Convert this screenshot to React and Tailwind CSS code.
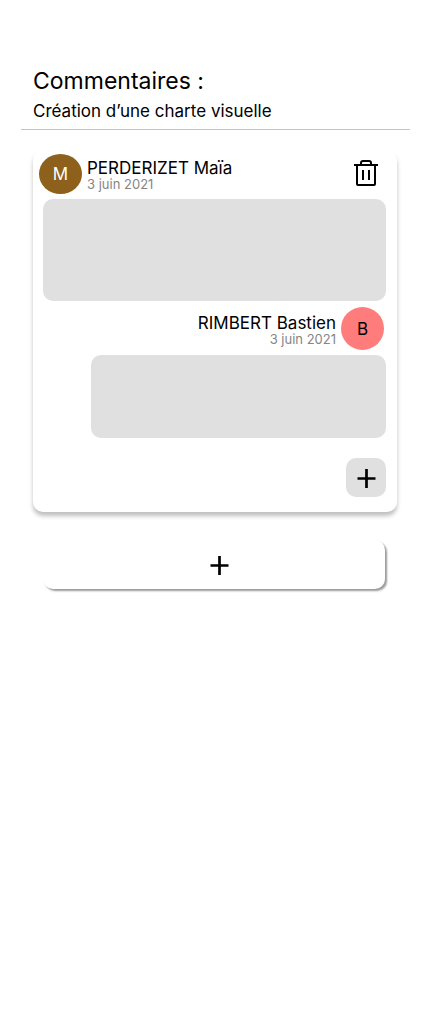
import React from "react";

function TrashIcon() {
  return (
    <svg width="24" height="26" viewBox="0 0 24 26" fill="none" stroke="black" strokeWidth="2" aria-hidden="true">
      <path d="M0 5H24" />
      <path d="M3 5V24Q3 25 4 25H20Q21 25 21 24V5" />
      <path d="M7 5V3Q7 1 9 1H15Q17 1 17 3V5" />
      <path d="M9 10V20M15 10V20" />
    </svg>
  );
}

function PlusIcon() {
  return (
    <svg width="19" height="20" viewBox="0 0 19 20" fill="none" stroke="black" strokeWidth="2.7" aria-hidden="true">
      <path d="M0.5 10.5H18.5M9.5 1V20" />
    </svg>
  );
}

function Author({ name, date, alignEnd }) {
  return (
    <div className={alignEnd ? "pt-[2px] text-right" : "pt-[2px] text-left"}>
      <h2 className="text-[17px] leading-[18px] text-black">{name}</h2>
      <p className="text-[13px] leading-[14px] text-[#858585]">{date}</p>
    </div>
  );
}

export default function App() {
  return (
    <main className="min-h-screen bg-white pt-[65px] font-['Inter','Liberation_Sans',sans-serif] text-black">
      <header className="ml-[21px] mr-[19px] border-b border-[#c4c4c4] px-3 pb-[7px]">
        <h1 className="text-[23px] leading-8">Commentaires :</h1>
        <p className="mt-1 text-[17px] leading-[21px]">Création d’une charte visuelle</p>
      </header>

      <section className="ml-[33px] mr-8 mt-5 rounded-[10px] pb-[15px] pl-[10px] pr-[11px] pt-[4px] shadow-[0_4px_4px_rgba(0,0,0,0.25)]">
        <article>
          <div className="-ml-1 flex items-center gap-[5px] pr-2">
            <div className="flex h-10 w-[43px] items-center justify-center rounded-[50%] bg-[#8d601b] pt-[2px] text-[17px] text-white">M</div>
            <Author name="PERDERIZET Maïa" date="3 juin 2021" />
            <button type="button" aria-label="Supprimer le commentaire" className="ml-auto cursor-pointer pb-[2px]">
              <TrashIcon />
            </button>
          </div>
          <div className="mt-[5px] h-[102px] rounded-[10px] bg-[#e0e0e0]" />
        </article>

        <article className="mt-[6px]">
          <div className="flex items-center justify-end gap-[5px] pr-[2px]">
            <Author name="RIMBERT Bastien" date="3 juin 2021" alignEnd />
            <div className="flex h-[43px] w-[43px] items-center justify-center rounded-full bg-[#ff7c7c] pt-[2px] text-[17px]">B</div>
          </div>
          <div className="ml-12 mt-[5px] h-[83px] rounded-[10px] bg-[#e0e0e0]" />
        </article>

        <div className="mt-5 flex justify-end">
          <button type="button" aria-label="Répondre" className="flex h-[39px] w-10 cursor-pointer items-center justify-center rounded-[10px] bg-[#e0e0e0]">
            <PlusIcon />
          </button>
        </div>
      </section>

      <div className="ml-[43px] mr-11 mt-7">
        <button type="button" aria-label="Ajouter un commentaire" className="flex h-[49px] w-full cursor-pointer items-center justify-center rounded-[10px] bg-white pl-[10px] shadow-[2px_2px_2px_rgba(0,0,0,0.4)]">
          <PlusIcon />
        </button>
      </div>
    </main>
  );
}
